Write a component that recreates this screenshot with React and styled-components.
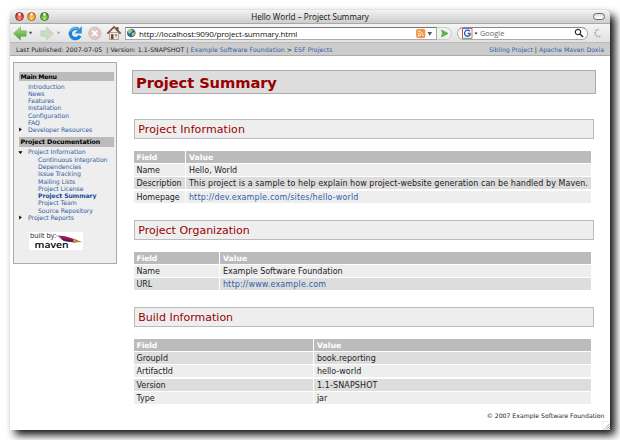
import React from 'react';
import styled, { createGlobalStyle, css } from 'styled-components';

const Global = createGlobalStyle`
  * { box-sizing: border-box; }
  body { margin: 0; background: #fff; overflow: hidden; }
`;

const verdana = '"DejaVu Sans", Verdana, sans-serif';
const lucida = '"Open Sans", "Lucida Grande", sans-serif';

const Desktop = styled.div`
  width: 620px;
  height: 440px;
  padding: 10px;
  overflow: hidden;
  background: #fff;
  font-family: ${verdana};
  color: #1c1c1c;
`;

const Window = styled.div`
  width: 600px;
  height: 420px;
  display: flex;
  flex-direction: column;
  border-radius: 5px 5px 0 0;
  background: #fff;
  box-shadow: 5px 5px 8px #111, 0 0 1px #ccc;
  overflow: hidden;
`;

const TitleBar = styled.header`
  flex: 0 0 14px;
  display: grid;
  grid-template-columns: 60px 1fr 60px;
  align-items: center;
  background: linear-gradient(#f3f3f3, #cdcdcd);
  border-bottom: 1px solid #a8a8a8;
`;

const Lights = styled.div`
  display: flex;
  gap: 3.6px;
  padding-left: 4.5px;
`;

const Light = styled.i`
  width: 9px;
  height: 9px;
  border-radius: 50%;
  border: 1px solid ${p => p.$edge};
  background: radial-gradient(ellipse at 50% 12%, #fff 0 12%, transparent 38%),
    radial-gradient(circle at 50% 90%, ${p => p.$glow}, ${p => p.$tone} 65%);
`;

const WindowTitle = styled.div`
  text-align: center;
  font: 500 8.15px/13px ${lucida};
  color: #111;
  white-space: nowrap;
`;

const Pill = styled.i`
  justify-self: end;
  margin-right: 5px;
  width: 12px;
  height: 7px;
  border: 1px solid #666;
  border-radius: 4px;
  background: linear-gradient(#ddd, #fff);
`;

const Toolbar = styled.nav`
  flex: 0 0 19px;
  display: flex;
  align-items: center;
  background: linear-gradient(#f5f5f5, #e2e2e2);
  border-bottom: 1px solid #bbb;
`;

const Tools = styled.div`
  width: 115px;
  height: 18px;
  svg { display: block; }
`;

const Address = styled.div`
  width: 312px;
  height: 13px;
  display: flex;
  align-items: center;
  background: #fff;
  border: 1px solid #aaa;
  border-top-color: #777;
`;

const Url = styled.span`
  flex: 1;
  padding-left: 3px;
  font: 500 8px/11px ${lucida};
  letter-spacing: -0.13px;
  color: #111;
`;

const Go = styled.div`
  width: 15px;
  height: 13px;
  display: grid;
  place-items: center;
  border: 1px solid #ccc;
  border-left: 0;
  border-radius: 0 7px 7px 0;
  background: #f1f1f1;
`;

const Search = styled.div`
  width: 131px;
  height: 13px;
  margin-left: 5px;
  padding: 0 3px 0 4px;
  display: flex;
  align-items: center;
  border: 1px solid #aaa;
  border-top-color: #888;
  border-radius: 7px;
  background: #fff;
`;

const SearchHint = styled.span`
  flex: 1;
  font: 7.4px/11px ${lucida};
  color: #666;
`;

const Spinner = styled.svg`
  margin-left: 5px;
`;

const Crumbs = styled.div`
  flex: 0 0 13px;
  min-height: 0;
  display: flex;
  justify-content: space-between;
  padding: 0 6px;
  background: #ccc;
  border-bottom: 1px solid #aaa;
  font-size: 6.2px;
  line-height: 14px;
  white-space: pre;
`;

const CrumbText = styled.span`
  height: 12px;
  letter-spacing: ${p => p.$ls}px;
`;

const Link = styled.a`
  color: #315fa5;
  ${p => p.$bold && css`font-weight: 700; color: #174f9c; letter-spacing: -0.1px;`}
`;

const Page = styled.div`
  flex: 1;
  display: grid;
  grid-template-columns: 121px 1fr;
`;

const Sidebar = styled.aside`
  width: 104px;
  height: 202px;
  margin: 6px 0 0 3px;
  padding: 8.5px 2px 0 5px;
  background: #eee;
  border: 1px solid #aaa;
`;

const MenuHead = styled.h5`
  margin: ${p => (p.$second ? '4px' : '0')} 0 1.5px;
  height: 9.5px;
  padding-left: 1.5px;
  background: #bbb;
  font-size: 6.3px;
  line-height: 10px;
  letter-spacing: ${p => p.$ls}px;
  color: #000;
  white-space: nowrap;
`;

const MenuItem = styled.div`
  height: 7.29px;
  display: flex;
  align-items: center;
  padding-left: ${p => (p.$nested ? 19 : 9)}px;
  font-size: 6.2px;
  line-height: 7.29px;
  letter-spacing: -0.07px;
  white-space: nowrap;
`;

const Marker = styled.svg`
  margin-left: -10px;
  margin-right: 5px;
  flex: none;
`;

const Maven = styled.svg`
  display: block;
  overflow: visible;
  margin: 11px 0 0 10px;
`;

const Main = styled.main`
  width: 466px;
  padding-top: 14px;
  margin-left: 0.5px;
`;

const PageTitle = styled.h1`
  width: 464.5px;
  margin: 0 0 25px;
  height: 24px;
  padding-left: 3.5px;
  background: #ddd;
  border: 1px solid #aaa;
  color: #900;
  font-size: 14.7px;
  line-height: 23px;
  letter-spacing: -0.1px;
`;

const Section = styled.section`
  width: 460px;
  margin-left: 2.5px;
  height: ${p => p.$h}px;
`;

const SectionTitle = styled.h2`
  width: 459.5px;
  margin: 0 0 11.5px;
  height: 20px;
  padding-left: 3.3px;
  background: #eee;
  border: 1px solid #bbb;
  color: #900;
  font-weight: 400;
  font-size: 11px;
  line-height: 20px;
  letter-spacing: ${p => p.$ls}px;
`;

const Table = styled.div`
  width: 456.5px;
  display: grid;
  grid-template-columns: ${p => p.$first}px 1fr;
  gap: 1.4px;
`;

const Cell = styled.div`
  height: 12px;
  padding-left: 2.5px;
  background: ${p => (p.$head ? '#bbb' : p.$dark ? '#ddd' : '#eee')};
  color: ${p => (p.$head ? '#fff' : '#1c1c1c')};
  font-weight: ${p => (p.$head ? 700 : 400)};
  font-size: ${p => (p.$head ? 7.7 : 8)}px;
  line-height: 14px;
  letter-spacing: ${p => p.$ls || 0}px;
  white-space: nowrap;
`;

const Footer = styled.footer`
  height: 20px;
  margin-top: 5px;
  padding-right: 6px;
  text-align: right;
  font-size: 6.16px;
  line-height: 12px;
  width: 479px;
  position: relative;
`;

const Grip = styled.svg`
  position: absolute;
  right: 0;
  bottom: 0;
`;

function ToolIcons() {
  return (
    <svg width="115" height="18" viewBox="10 24 115 18">
      <defs>
        <linearGradient id="green" x2="0" y2="1">
          <stop stopColor="#b6e391" /><stop offset="1" stopColor="#3f9b27" />
        </linearGradient>
      </defs>
      <path d="M13.5 33.5 20.5 27v3.8h5.7v5.4h-5.7V40z" fill="url(#green)" stroke="#68a952" strokeWidth=".6" />
      <path d="M28.7 31.8h3.7l-1.85 2.6z" fill="#555" />
      <path d="M53.5 33.5 46.5 27v3.8h-5.7v5.4h5.7V40z" fill="#c9dbc4" stroke="#b7cbb2" strokeWidth=".6" />
      <path d="M56.7 31.8h3.7l-1.85 2.6z" fill="#aaa" />
      <path d="M78.3 29.3A5.1 5.1 0 1 0 80 35.8" fill="none" stroke="#1c83d5" strokeWidth="3.3" />
      <path d="M77.5 28.8A5 5 0 0 0 70 31.5" fill="none" stroke="#66c7f5" strokeWidth="1.4" />
      <path d="M81.8 26.3v7.3h-7.4z" fill="#2791df" />
      <circle cx="94.8" cy="33.3" r="6.2" fill="#dfc6c6" stroke="#cfb5b5" strokeWidth=".7" />
      <path d="m92.2 30.7 5.2 5.2m0-5.2-5.2 5.2" stroke="#fff" strokeWidth="1.7" />
      <path d="M109.5 32.5h9v7h-9z" fill="#f0e4d6" stroke="#9b8573" strokeWidth=".7" />
      <path d="M116.3 27h2.2v4h-2.2z" fill="#7d4a38" />
      <path d="m107.3 33.6 6.7-6.7 6.7 6.7" fill="none" stroke="#83503f" strokeWidth="1.8" />
      <path d="M111 34.3h2.5v5H111z" fill="#6d4a36" />
      <path d="M115 34h2v2.4h-2z" fill="#7fa5bb" />
    </svg>
  );
}

function Globe() {
  return (
    <svg width="10" height="10" viewBox="0 0 10 10">
      <circle cx="5.3" cy="5" r="4.3" fill="#2867a8" />
      <path d="M2 3 4.5 1.3 7 2 5.6 4 3.8 5.8 2.3 5zM6 5l2.7-.8.2 2-2 2.3-1.2-1.6z" fill="#a9c951" />
      <path d="M2 2.7A4 4 0 0 1 5 1" fill="none" stroke="#bcdcf2" />
    </svg>
  );
}

function Feed() {
  return (
    <svg width="20" height="11" viewBox="0 0 20 11">
      <rect x=".5" y="1.3" width="8.4" height="8.4" rx="1.3" fill="#f39436" stroke="#dd7c25" strokeWidth=".5" />
      <circle cx="2.7" cy="7.7" r=".9" fill="#fff" />
      <path d="M2 5.2a3 3 0 0 1 3 3M2 3a5.2 5.2 0 0 1 5.2 5.2" fill="none" stroke="#fff" strokeWidth=".9" />
      <path d="M11.5 4h4.6l-2.3 3.8z" fill="#555" />
    </svg>
  );
}

function GoogleMark() {
  return (
    <svg width="18" height="11" viewBox="0 0 18 11">
      <rect x=".5" y=".5" width="9.5" height="10" fill="#fff" />
      <path d="M.5 10.5V.5" stroke="#d9443b" /><path d="M.5.6H10" stroke="#4b72d8" />
      <path d="M10 0v10.5" stroke="#df6b56" /><path d="M.5 10.3H10" stroke="#4ca854" />
      <path d="M7.8 3.2A3 3 0 1 0 8 7V5.5H5.7" fill="none" stroke="#2f52b5" strokeWidth="1.3" />
      <path d="M12.5 4.5h3l-1.5 2z" fill="#222" />
    </svg>
  );
}

function Arrow({ open }) {
  return (
    <Marker width="5" height="5" viewBox="0 0 5 5">
      <path d={open ? 'M.3 1.2h4.2L2.4 3.9z' : 'M1.2.5v4l2.6-2z'} fill="#000" />
    </Marker>
  );
}

function MavenBadge() {
  return (
    <Maven width="54" height="18" viewBox="0 0 54 18">
      <path d="M0 0h54v18H0z" fill="#fff" />
      <text x="1" y="6" fontFamily="Open Sans" fontSize="6.4" textLength="26" lengthAdjust="spacingAndGlyphs" fill="#222">built by:</text>
      <text x="5.5" y="16.4" fontFamily="Open Sans" fontWeight="600" fontSize="9.5" textLength="34" lengthAdjust="spacingAndGlyphs" fill="#000">maven</text>
      <path d="M27 4q2-1 4 2" fill="none" stroke="#888" strokeWidth=".6" />
      <path d="M29 3.5 36 4.2 47 7.5 46 10.5 35 9z" fill="#a51355" />
      <path d="M31 6 47 9.3 46 10.5 35 9z" fill="#47205b" />
      <path d="m46 7.3 7 2.7-7 .5z" fill="#a98436" />
      <path d="m44.5 7 2 .5-.8 3-1.7-.3z" fill="#d69b3e" />
    </Maven>
  );
}

function DataTable({ first, darkFirst, rows }) {
  return (
    <Table $first={first}>
      <Cell $head $ls={-0.1}>Field</Cell>
      <Cell $head $ls={0.05}>Value</Cell>
      {rows.map(([name, value, href, ls], i) => {
        const dark = (i % 2 === 0) === Boolean(darkFirst);
        return (
          <React.Fragment key={name}>
            <Cell $dark={dark} $ls={-0.05}>{name}</Cell>
            <Cell $dark={dark} $ls={ls}>{href ? <Link>{value}</Link> : value}</Cell>
          </React.Fragment>
        );
      })}
    </Table>
  );
}

const mainMenu = ['Introduction', 'News', 'Features', 'Installation', 'Configuration', 'FAQ'];
const infoMenu = ['Continuous Integration', 'Dependencies', 'Issue Tracking', 'Mailing Lists',
  'Project License', 'Project Summary', 'Project Team', 'Source Repository'];

export default function App() {
  return (
    <Desktop>
      <Global />
      <Window>
        <TitleBar>
          <Lights>
            <Light $tone="#d63a34" $glow="#ff9b88" $edge="#8d2a28" />
            <Light $tone="#e99220" $glow="#ffe27a" $edge="#a6601a" />
            <Light $tone="#52a52d" $glow="#c4f37a" $edge="#397321" />
          </Lights>
          <WindowTitle>Hello World – Project Summary</WindowTitle>
          <Pill />
        </TitleBar>
        <Toolbar>
          <Tools><ToolIcons /></Tools>
          <Address>
            <Globe />
            <Url>http://localhost:9090/project-summary.html</Url>
            <Feed />
          </Address>
          <Go>
            <svg width="9" height="9" viewBox="0 0 9 9"><path d="M1.5 1 8 4.5l-6.5 3.5 1-3.5z" fill="#57bd3c" stroke="#3b9f2d" strokeWidth=".6" /></svg>
          </Go>
          <Search>
            <GoogleMark />
            <SearchHint>Google</SearchHint>
            <svg width="10" height="10" viewBox="0 0 10 10"><circle cx="4" cy="4" r="2.7" fill="none" stroke="#333" strokeWidth="1.2" /><path d="m6 6 3 3" stroke="#333" strokeWidth="1.7" /></svg>
          </Search>
          <Spinner width="10" height="10" viewBox="0 0 10 10">
            <path d="M5.5 1.5A3.5 3.5 0 1 0 8 7.5" fill="none" stroke="#aaa" strokeWidth="2" strokeDasharray="1.2 .9" />
          </Spinner>
        </Toolbar>
        <Crumbs>
          <CrumbText $ls={0.06}>{'Last Published: 2007-07-05  | Version: 1.1-SNAPSHOT | '}<Link>Example Software Foundation</Link>{' > '}<Link>ESF Projects</Link></CrumbText>
          <CrumbText $ls={0}><Link>Sibling Project</Link>{' | '}<Link>Apache Maven Doxia</Link></CrumbText>
        </Crumbs>
        <Page>
          <Sidebar>
            <MenuHead $ls={-0.3}>Main Menu</MenuHead>
            {mainMenu.map(t => <MenuItem key={t}><Link>{t}</Link></MenuItem>)}
            <MenuItem><Arrow /><Link>Developer Resources</Link></MenuItem>
            <MenuHead $second $ls={-0.1}>Project Documentation</MenuHead>
            <MenuItem><Arrow open /><Link>Project Information</Link></MenuItem>
            {infoMenu.map(t => <MenuItem key={t} $nested><Link $bold={t === 'Project Summary'}>{t}</Link></MenuItem>)}
            <MenuItem><Arrow /><Link>Project Reports</Link></MenuItem>
            <MavenBadge />
          </Sidebar>
          <Main>
            <PageTitle>Project Summary</PageTitle>
            <Section $h={101}>
              <SectionTitle $ls={0.1}>Project Information</SectionTitle>
              <DataTable first={51} rows={[
                ['Name', 'Hello, World'],
                ['Description', 'This project is a sample to help explain how project-website generation can be handled by Maven.', false, 0.05],
                ['Homepage', 'http://dev.example.com/sites/hello-world', true, 0.15],
              ]} />
            </Section>
            <Section $h={87}>
              <SectionTitle $ls={0}>Project Organization</SectionTitle>
              <DataTable first={85} rows={[
                ['Name', 'Example Software Foundation'],
                ['URL', 'http://www.example.com', true, 0.15],
              ]} />
            </Section>
            <Section $h={98}>
              <SectionTitle $ls={0}>Build Information</SectionTitle>
              <DataTable first={179} darkFirst rows={[
                ['GroupId', 'book.reporting'],
                ['ArtifactId', 'hello-world'],
                ['Version', '1.1-SNAPSHOT', false, 0.12],
                ['Type', 'jar'],
              ]} />
            </Section>
            <Footer>
              © 2007 Example Software Foundation
              <Grip width="9" height="9" viewBox="0 0 9 9"><path d="M0 9V0h9" fill="none" stroke="#ddd" /><path d="m2 8.5 6-6m-3.5 6L8 5m-1.5 3.5L8 7" stroke="#888" strokeWidth=".8" /></Grip>
            </Footer>
          </Main>
        </Page>
      </Window>
    </Desktop>
  );
}
